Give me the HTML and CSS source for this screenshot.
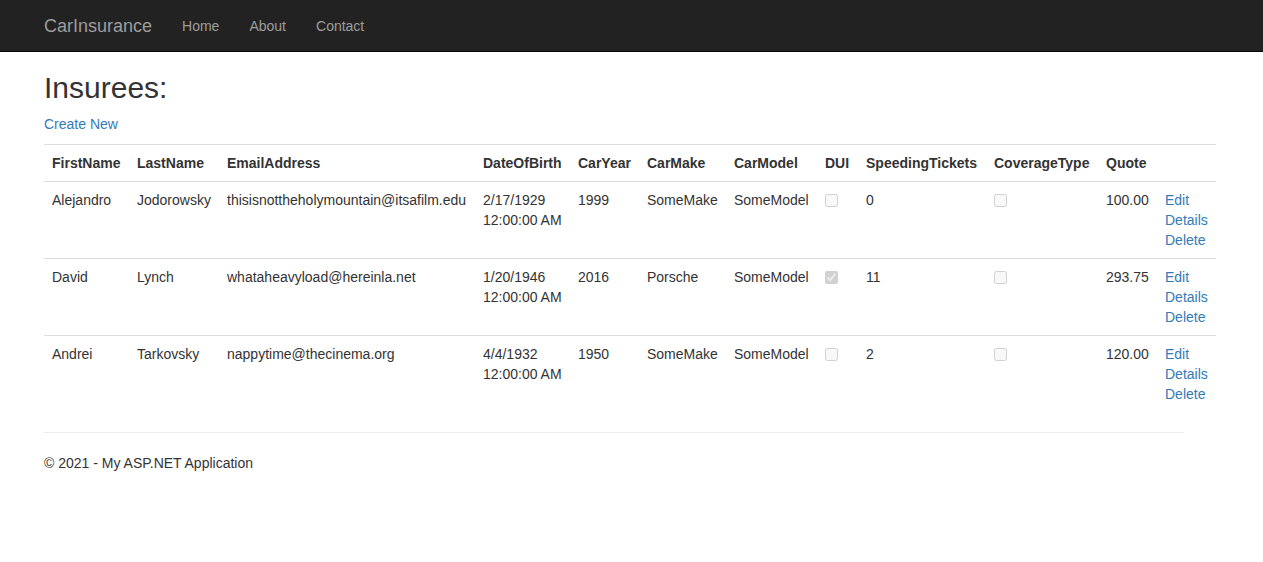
FILE: index.html
```html
<!DOCTYPE html>
<html>
<head>
<meta charset="utf-8">
<title>Index - CarInsurance</title>
<link rel="stylesheet" href="styles.css">
</head>
<body>
<div class="navbar">
  <div class="container nav-inner">
    <a class="brand" href="#">CarInsurance</a>
    <ul class="nav">
      <li><a href="#">Home</a></li>
      <li><a href="#">About</a></li>
      <li><a href="#">Contact</a></li>
    </ul>
  </div>
</div>
<div class="container body-content">
  <h2>Insurees:</h2>
  <p><a href="#">Create New</a></p>
  <table class="table">
    <colgroup>
      <col class="c-first"><col class="c-last"><col class="c-email"><col class="c-dob"><col class="c-year"><col class="c-make"><col class="c-model"><col class="c-dui"><col class="c-tickets"><col class="c-cov"><col class="c-quote"><col class="c-actions">
    </colgroup>
    <tr>
      <th>FirstName</th><th>LastName</th><th>EmailAddress</th><th>DateOfBirth</th><th>CarYear</th><th>CarMake</th><th>CarModel</th><th>DUI</th><th>SpeedingTickets</th><th>CoverageType</th><th>Quote</th><th></th>
    </tr>
    <tr>
      <td>Alejandro</td><td>Jodorowsky</td><td>thisisnottheholymountain@itsafilm.edu</td><td>2/17/1929 <span class="nowrap">12:00:00 AM</span></td><td>1999</td><td>SomeMake</td><td>SomeModel</td>
      <td><input class="check" type="checkbox" disabled></td><td>0</td><td><input class="check" type="checkbox" disabled></td><td>100.00</td>
      <td><a href="#">Edit</a><br><a href="#">Details</a><br><a href="#">Delete</a></td>
    </tr>
    <tr>
      <td>David</td><td>Lynch</td><td>whataheavyload@hereinla.net</td><td>1/20/1946 <span class="nowrap">12:00:00 AM</span></td><td>2016</td><td>Porsche</td><td>SomeModel</td>
      <td><input class="check" type="checkbox" disabled checked></td><td>11</td><td><input class="check" type="checkbox" disabled></td><td>293.75</td>
      <td><a href="#">Edit</a><br><a href="#">Details</a><br><a href="#">Delete</a></td>
    </tr>
    <tr>
      <td>Andrei</td><td>Tarkovsky</td><td>nappytime@thecinema.org</td><td>4/4/1932 <span class="nowrap">12:00:00 AM</span></td><td>1950</td><td>SomeMake</td><td>SomeModel</td>
      <td><input class="check" type="checkbox" disabled></td><td>2</td><td><input class="check" type="checkbox" disabled></td><td>120.00</td>
      <td><a href="#">Edit</a><br><a href="#">Details</a><br><a href="#">Delete</a></td>
    </tr>
  </table>
  <hr class="rule">
  <footer class="footer">
    <p>&copy; 2021 - My ASP.NET Application</p>
  </footer>
</div>
</body>
</html>
```
FILE: styles.css
```css
* { box-sizing: border-box; }
html, body { margin: 0; padding: 0; }
body {
  font-family: "Liberation Sans", Arial, Helvetica, sans-serif;
  font-size: 14px;
  line-height: 20px;
  color: #333;
  background: #fff;
}
a { color: #337ab7; text-decoration: none; }
.container {
  width: 1170px;
  margin-left: 29px;
  padding: 0 15px;
}
.navbar {
  height: 52px;
  background: #222;
  border-bottom: 1px solid #080808;
}
.nav-inner {
  display: flex;
  align-items: flex-start;
}
.brand {
  display: block;
  margin-left: -15px;
  padding: 16px 15px 15px;
  font-size: 18px;
  line-height: 20px;
  color: #9d9d9d;
}
.nav {
  display: flex;
  list-style: none;
  margin: 0;
  padding: 0;
}
.nav a {
  display: block;
  padding: 16px 15px 15px;
  line-height: 20px;
  color: #9d9d9d;
}
h2 {
  font-size: 30px;
  font-weight: 500;
  line-height: 33px;
  margin: 19px 0 10px;
}
p { margin: 0 0 10px; }
.table {
  width: 1172px;
  table-layout: fixed;
  border-collapse: collapse;
  border-spacing: 0;
  margin-bottom: 20px;
}
.c-first { width: 85px; }
.c-last { width: 90px; }
.c-email { width: 256px; }
.c-dob { width: 95px; }
.c-year { width: 69px; }
.c-make { width: 87px; }
.c-model { width: 91px; }
.c-dui { width: 41px; }
.c-tickets { width: 128px; }
.c-cov { width: 112px; }
.c-quote { width: 59px; }
.c-actions { width: 59px; }
.table th, .table td {
  padding: 8px;
  line-height: 20px;
  vertical-align: top;
  text-align: left;
  border-top: 1px solid #ddd;
  white-space: nowrap;
  overflow: visible;
}
.table td:nth-child(4) { white-space: normal; }
.nowrap { white-space: nowrap; }
.table th { font-weight: bold; }
.check {
  margin: 4px 0 0;
  width: 13px;
  height: 13px;
}
.rule {
  width: 1140px;
  margin: 20px 0;
  border: 0;
  border-top: 1px solid #eee;
  height: 0;
}
.footer p { margin: 0 0 10px; }
```
